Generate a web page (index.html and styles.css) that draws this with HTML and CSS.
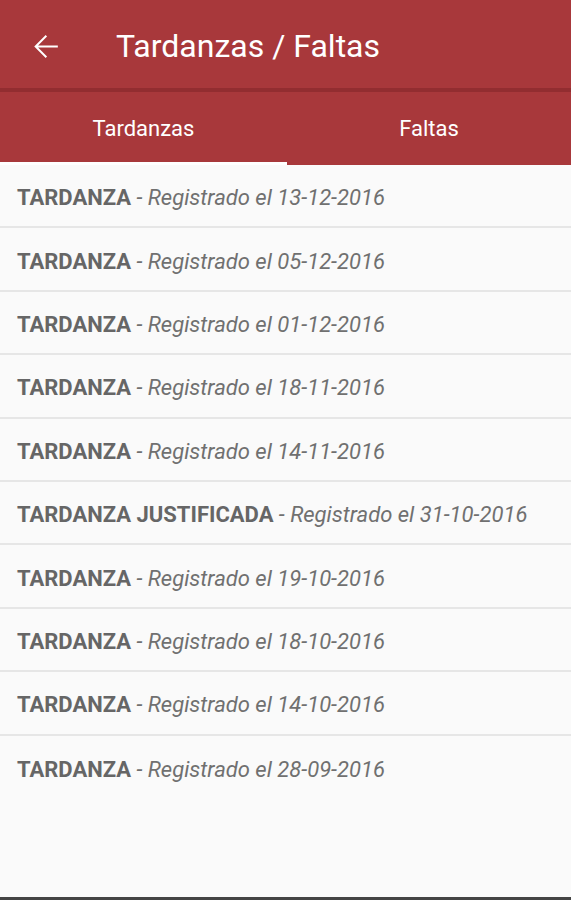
FILE: index.html
```html
<!DOCTYPE html>
<html lang="es">
<head>
<meta charset="utf-8">
<title>Tardanzas / Faltas</title>
<link rel="stylesheet" href="styles.css">
</head>
<body>
<div class="app">
  <header class="toolbar">
    <button class="back" aria-label="Atrás">
      <svg width="37" height="37" viewBox="0 0 24 24"><path d="M20 11.3H7.2l5.8-5.8-0.9-0.9L4.7 12l7.4 7.4 0.9-0.9-5.8-5.8H20v-1.4z" fill="#fff"/></svg>
    </button>
    <h1 class="title">Tardanzas / Faltas</h1>
  </header>
  <nav class="tabs">
    <div class="tab active">Tardanzas</div>
    <div class="tab">Faltas</div>
  </nav>
  <ul class="list">
    <li class="row"><b>TARDANZA</b><i> - Registrado el 13-12-2016</i></li>
    <li class="row"><b>TARDANZA</b><i> - Registrado el 05-12-2016</i></li>
    <li class="row"><b>TARDANZA</b><i> - Registrado el 01-12-2016</i></li>
    <li class="row"><b>TARDANZA</b><i> - Registrado el 18-11-2016</i></li>
    <li class="row"><b>TARDANZA</b><i> - Registrado el 14-11-2016</i></li>
    <li class="row"><b>TARDANZA JUSTIFICADA</b><i> - Registrado el 31-10-2016</i></li>
    <li class="row"><b>TARDANZA</b><i> - Registrado el 19-10-2016</i></li>
    <li class="row"><b>TARDANZA</b><i> - Registrado el 18-10-2016</i></li>
    <li class="row"><b>TARDANZA</b><i> - Registrado el 14-10-2016</i></li>
    <li class="row last"><b>TARDANZA</b><i> - Registrado el 28-09-2016</i></li>
  </ul>
  <div class="bottom"></div>
</div>
</body>
</html>
```
FILE: styles.css
```css
* { box-sizing: border-box; }
html, body { margin: 0; padding: 0; }
body {
  font-family: Roboto, "Noto Sans", sans-serif;
  background: #fafafa;
  width: 571px;
  height: 900px;
  overflow: hidden;
}
.app {
  display: flex;
  flex-direction: column;
  height: 900px;
}
.toolbar {
  height: 92px;
  background: #a8383b;
  display: flex;
  align-items: center;
  padding-left: 27px;
  padding-top: 4px;
  border-bottom: 4px solid #922d30;
}
.back {
  width: 37px;
  height: 37px;
  padding: 0;
  border: 0;
  background: none;
  display: flex;
}
.title {
  margin: 0 0 0 52px;
  font-weight: 400;
  font-size: 32px;
  color: #fff;
}
.tabs {
  height: 73px;
  background: #a8383b;
  display: flex;
}
.tab {
  flex: 1;
  display: flex;
  align-items: center;
  justify-content: center;
  color: #fff;
  font-size: 22px;
  padding-top: 3px;
  border-bottom: 3px solid transparent;
}
.tab:first-child { flex: 0 0 287px; }
.tab.active { border-bottom-color: #fff; }
.list {
  list-style: none;
  margin: 0;
  padding: 0;
}
.row {
  height: 63.4px;
  border-bottom: 2px solid #e6e6e6;
  display: flex;
  align-items: center;
  padding-left: 17px;
  padding-top: 4px;
  font-size: 22px;
  white-space: pre;
}
.row.last { border-bottom: 0; }
.row b { font-weight: 700; color: #666; }
.row i { color: #707070; }
.bottom {
  margin-top: auto;
  height: 3px;
  background: #444;
}
```
